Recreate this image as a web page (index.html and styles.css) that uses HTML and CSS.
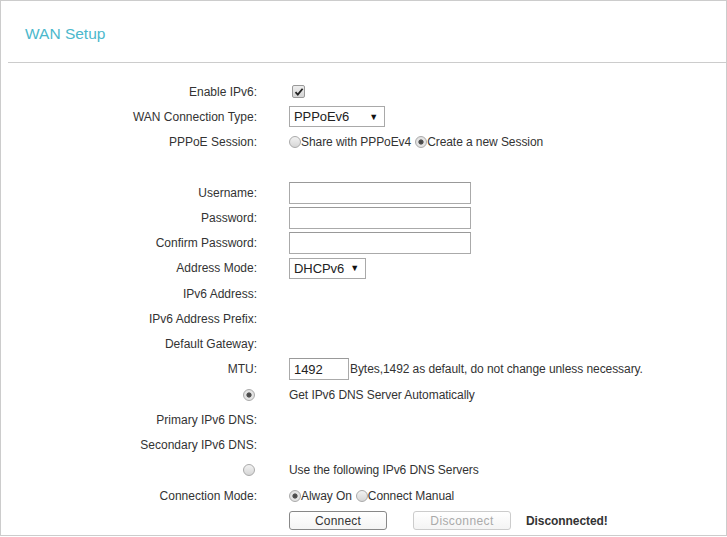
FILE: index.html
```html
<!DOCTYPE html>
<html lang="en">

<head>
  <meta charset="UTF-8" />
  <meta name="viewport" content="width=device-width, initial-scale=1.0" />
  <title>WAN Setup</title>
  <link rel="stylesheet" href="styles.css">
</head>

<body>
  <div class="panel">

    <div class="panel-head">
      <div class="panel-title">WAN Setup</div>
    </div>

    <div class="form">
      <div class="label">Enable IPv6:</div>
      <div class="field"><span class="check"><svg width="10" height="10" viewBox="0 0 10 10"><path d="M1.5 5.2 L3.8 7.6 L8.6 1.8" fill="none" stroke="#222" stroke-width="1.8"/></svg></span></div>

      <div class="label">WAN Connection Type:</div>
      <div class="field"><div class="select select-wide"><span>PPPoEv6</span><span class="arrow">&#9660;</span></div></div>

      <div class="label">PPPoE Session:</div>
      <div class="field">
        <span class="radio"></span><span>Share with PPPoEv4</span>
        <span class="radio checked spaced"></span><span>Create a new Session</span>
      </div>

      <div class="label"></div>
      <div class="field"></div>

      <div class="label">Username:</div>
      <div class="field"><span class="text-input"></span></div>

      <div class="label">Password:</div>
      <div class="field"><span class="text-input"></span></div>

      <div class="label">Confirm Password:</div>
      <div class="field"><span class="text-input"></span></div>

      <div class="label">Address Mode:</div>
      <div class="field"><div class="select select-narrow"><span>DHCPv6</span><span class="arrow">&#9660;</span></div></div>

      <div class="label">IPv6 Address:</div>
      <div class="field"></div>

      <div class="label">IPv6 Address Prefix:</div>
      <div class="field"></div>

      <div class="label">Default Gateway:</div>
      <div class="field"></div>

      <div class="label">MTU:</div>
      <div class="field"><span class="text-input mtu">1492</span><span class="hint">Bytes,1492 as default, do not change unless necessary.</span></div>

      <div class="label"><span class="radio checked"></span></div>
      <div class="field">Get IPv6 DNS Server Automatically</div>

      <div class="label">Primary IPv6 DNS:</div>
      <div class="field"></div>

      <div class="label">Secondary IPv6 DNS:</div>
      <div class="field"></div>

      <div class="label"><span class="radio"></span></div>
      <div class="field">Use the following IPv6 DNS Servers</div>

      <div class="label">Connection Mode:</div>
      <div class="field">
        <span class="radio checked"></span><span>Alway On</span>
        <span class="radio spaced"></span><span>Connect Manual</span>
      </div>

      <div class="label"></div>
      <div class="field buttons">
        <span class="btn">Connect</span>
        <span class="btn disabled">Disconnect</span>
        <span class="status">Disconnected!</span>
      </div>
    </div>

  </div>
</body>

</html>
```

FILE: styles.css
```css
body {
  margin: 0;
  font-family: 'Liberation Sans', Arial, sans-serif;
  font-size: 12px;
  color: #333;
  background-color: #fff;
}

.panel {
  width: 727px;
  height: 536px;
  box-sizing: border-box;
  border: 1px solid #ccc;
}

.panel-head {
  margin-left: 7px;
  height: 61px;
  border-bottom: 1px solid #ccc;
}

.panel-title {
  padding: 23px 0 0 17px;
  font-size: 15.5px;
  line-height: 20px;
  color: #4bb8cc;
}

.form {
  display: grid;
  grid-template-columns: 256px 1fr;
  grid-auto-rows: 25.25px;
  column-gap: 32px;
  align-items: center;
  padding-top: 16px;
}

.label {
  text-align: right;
  display: flex;
  justify-content: flex-end;
  align-items: center;
}

.label .radio {
  margin-right: 2px;
}

.field {
  display: flex;
  align-items: center;
  letter-spacing: -0.07px;
}

.check {
  width: 11px;
  height: 11px;
  margin-left: 3px;
  border: 1px solid #999;
  border-radius: 2px;
  background: linear-gradient(#eee, #d4d4d4);
  display: flex;
  align-items: center;
  justify-content: center;
}

.radio {
  width: 10px;
  height: 10px;
  border: 1px solid #aaa;
  border-radius: 50%;
  background: linear-gradient(#f2f2f2, #d6d6d6);
  flex: 0 0 auto;
}

.radio.checked {
  background: radial-gradient(circle, #444 0, #555 2.2px, #e6e6e6 3px, #dcdcdc 100%);
}

.radio.spaced {
  margin-left: 4px;
}

.select {
  height: 19px;
  box-sizing: content-box;
  border: 1px solid #a9a9a9;
  display: flex;
  align-items: center;
  justify-content: space-between;
  padding: 0 6px 0 4px;
  font-size: 13px;
  color: #222;
  background-color: #fff;
}

.select-wide {
  width: 84px;
}

.select-narrow {
  width: 65px;
}

.arrow {
  font-size: 9px;
  color: #111;
}

.text-input {
  width: 180px;
  height: 20px;
  border: 1px solid #aaa;
  border-top-color: #999;
  background-color: #fff;
  display: flex;
  align-items: center;
  font-size: 13px;
  color: #222;
}

.text-input.mtu {
  width: 54px;
  padding-left: 4px;
}

.hint {
  margin-left: 1px;
}

.btn {
  width: 96px;
  height: 17px;
  border: 1px solid #888;
  border-radius: 3px;
  background: linear-gradient(#fff, #f4f4f4);
  display: flex;
  align-items: center;
  justify-content: center;
  letter-spacing: 0.2px;
  color: #333;
}

.btn.disabled {
  margin-left: 26px;
  border-color: #ccc;
  color: #aaa;
  letter-spacing: 0.4px;
}

.status {
  margin-left: 15px;
  font-weight: bold;
  color: #333;
}
```
